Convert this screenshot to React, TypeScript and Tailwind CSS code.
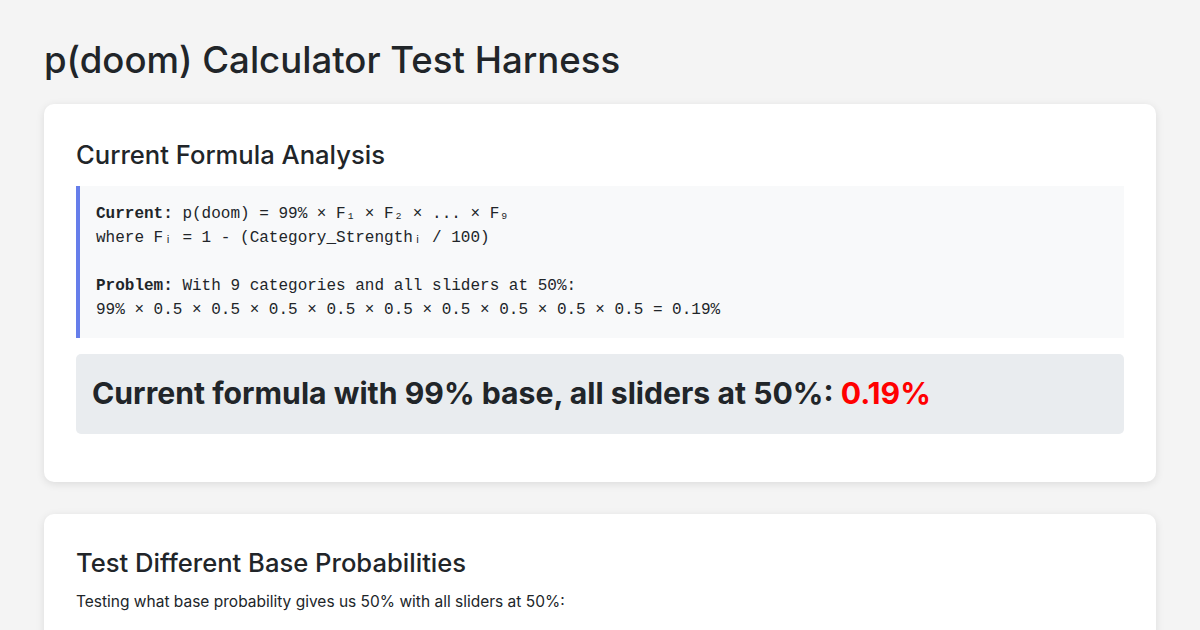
export default function App() {
  const mono = "font-['Liberation_Mono',monospace]";
  return (
    <div className="min-h-screen bg-[#f4f4f4] font-['Inter',sans-serif] text-[#212529]">
      <div className="mx-auto max-w-[1200px] px-[44px] pt-[38px]">
        <h1 className="text-[36.6px] font-medium leading-[44px] mb-[22px]">p(doom) Calculator Test Harness</h1>

        <section className="bg-white rounded-[10px] shadow-[0_2px_8px_rgba(0,0,0,0.1)] px-8 pt-[36px] pb-12 mb-8">
          <h2 className="text-[25.6px] font-medium leading-[30px] mb-4">Current Formula Analysis</h2>
          <div className={`bg-[#f8f9fa] border-l-4 border-[#667eea] px-4 py-4 text-[16px] leading-6 whitespace-pre ${mono}`}>
            <div><b>Current:</b> p(doom) = 99% × F₁ × F₂ × ... × F₉</div>
            <div>where Fᵢ = 1 - (Category_Strengthᵢ / 100)</div>
            <div>&nbsp;</div>
            <div><b>Problem:</b> With 9 categories and all sliders at 50%:</div>
            <div>99% × 0.5 × 0.5 × 0.5 × 0.5 × 0.5 × 0.5 × 0.5 × 0.5 × 0.5 = 0.19%</div>
          </div>
          <div className="mt-4 h-[80px] flex items-center px-4 bg-[#e9ecef] rounded-[5px]">
            <h3 className="text-[30.2px] font-bold">
              Current formula with 99% base, all sliders at 50%: <span className="text-[#ff0000]">0.19%</span>
            </h3>
          </div>
        </section>

        <section className="bg-white rounded-[10px] shadow-[0_2px_8px_rgba(0,0,0,0.1)] px-8 pt-[34px] pb-12">
          <h2 className="text-[25.6px] font-medium leading-[30px] mb-[12px]">Test Different Base Probabilities</h2>
          <p className="text-[15.5px] leading-6 mb-4">Testing what base probability gives us 50% with all sliders at 50%:</p>
          <div className="bg-[#f8f9fa] h-[120px]" />
        </section>
      </div>
    </div>
  );
}
